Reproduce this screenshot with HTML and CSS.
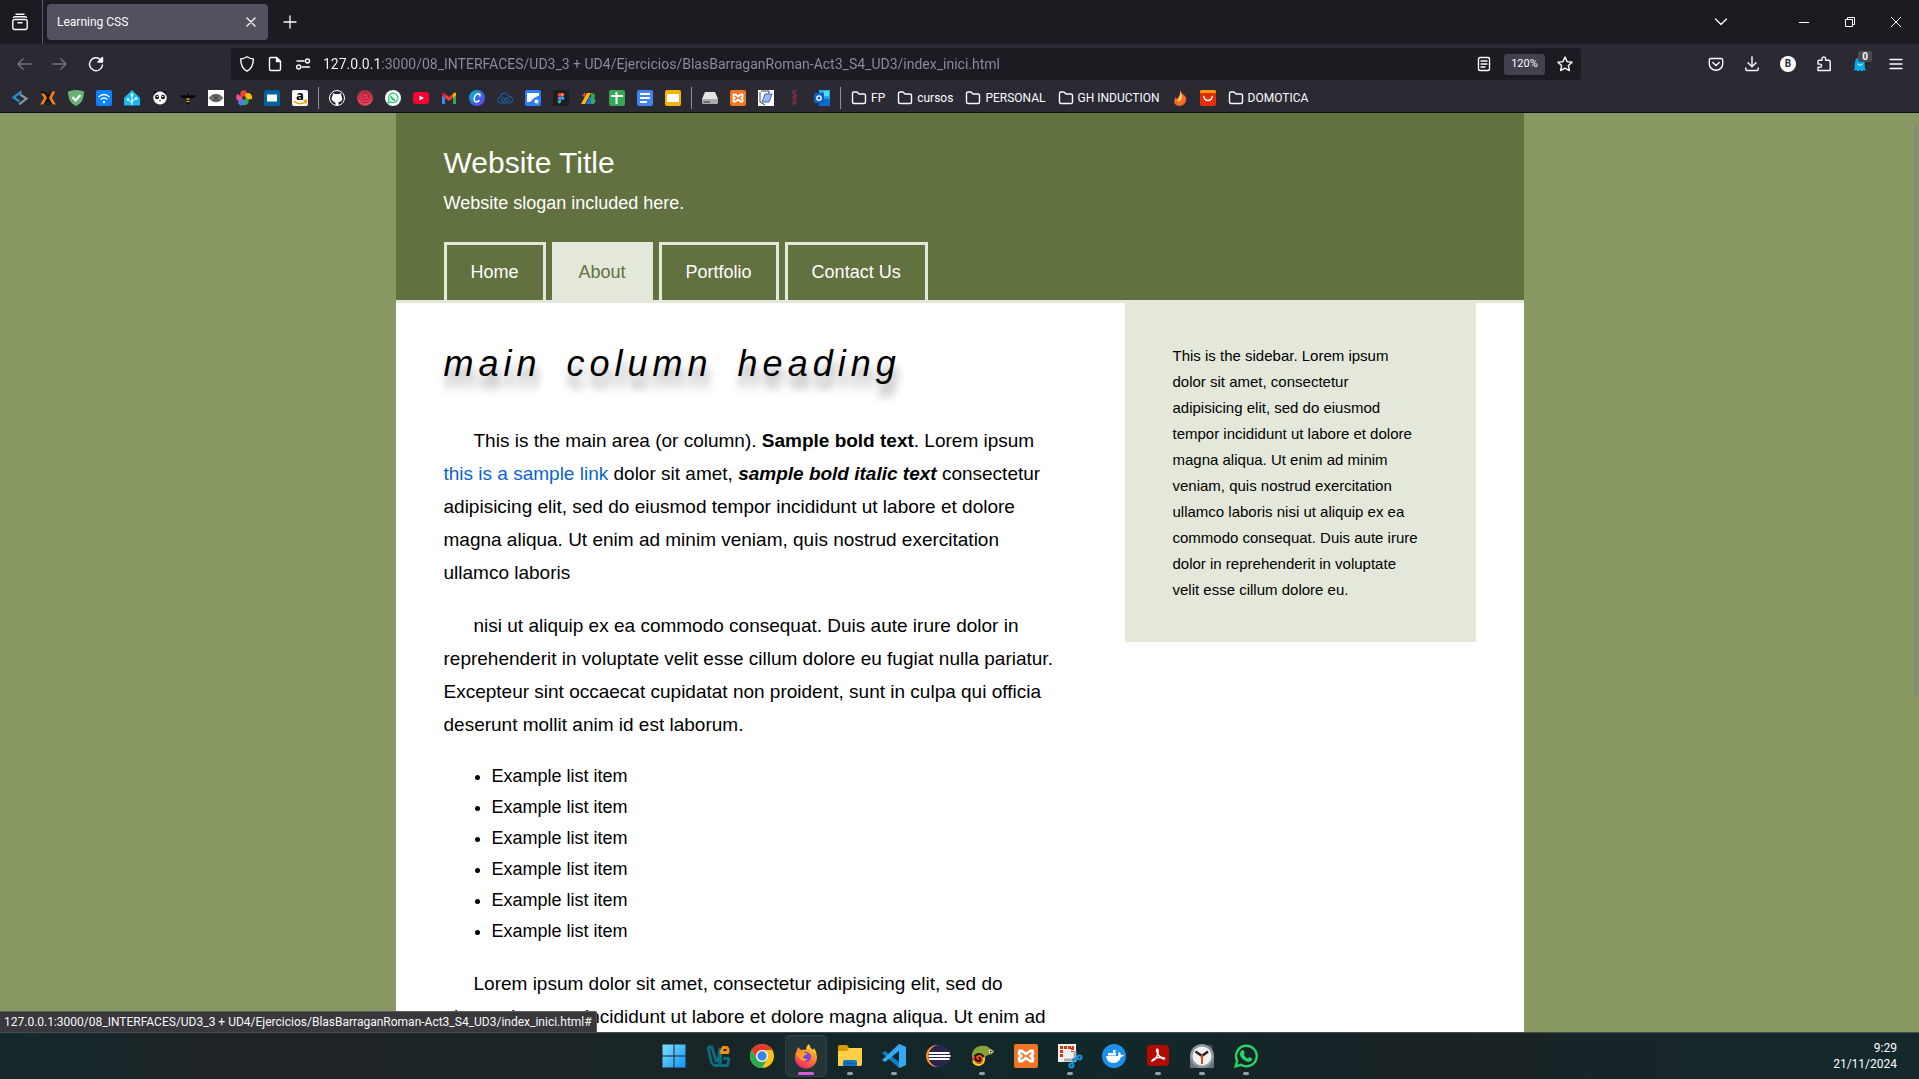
FILE: index.html
```html
<!DOCTYPE html>
<html lang="en">
<head>
<meta charset="utf-8">
<title>Learning CSS</title>
<link rel="stylesheet" href="styles.css">
</head>
<body>
<header class="browser">
  <div class="tabbar">
    <button class="icon-btn recent" aria-label="Recent browsing"><svg class="i18 line" viewBox="0 0 18 18"><rect x="1.8" y="6.500" width="14.400" height="10" rx="2"/><path d="M2.500 4.500Q3 3.700 4 3.700h10q1 0 1.500.8M5 1.200h8M7 9.800h4"/></svg></button>
    <div class="tab"><span>Learning CSS</span><button class="icon-btn" aria-label="Close tab"><svg class="i10 thin" viewBox="0 0 10 10"><path d="M1 1l8 8M9 1l-8 8"/></svg></button></div>
    <button class="icon-btn newtab" aria-label="New tab"><svg class="i14 thin" viewBox="0 0 14 14"><path d="M7 1v12M1 7h12"/></svg></button>
    <div class="window-controls">
      <button class="icon-btn alltabs" aria-label="List all tabs"><svg class="i14 thin" viewBox="0 0 14 14"><path d="M1.500 4L7 9.500 12.500 4"/></svg></button>
      <button class="icon-btn" aria-label="Minimize"><svg class="i10 hair" viewBox="0 0 10 10"><path d="M0 5.500h10"/></svg></button>
      <button class="icon-btn" aria-label="Restore"><svg class="i10 hair" viewBox="0 0 10 10"><path d="M.5 2.500h7v7h-7zM2.500 2.500v-2h7v7h-2"/></svg></button>
      <button class="icon-btn" aria-label="Close"><svg class="i10 hair" viewBox="0 0 10 10"><path d="M0 0l10 10M10 0L0 10"/></svg></button>
    </div>
  </div>
  <div class="navbar">
    <div class="history">
      <button class="icon-btn dim" aria-label="Back"><svg class="i16 line" viewBox="0 0 16 16"><path d="M15 8H2M7 3L2 8l5 5"/></svg></button>
      <button class="icon-btn dim" aria-label="Forward"><svg class="i16 line" viewBox="0 0 16 16"><path d="M1 8h13M9 3l5 5-5 5"/></svg></button>
      <button class="icon-btn" aria-label="Reload"><svg class="i16 line" viewBox="0 0 16 16"><path d="M12.500 3.500A6.500 6.500 0 1 0 14.500 9"/><path fill="#fbfbfe" d="M14.500 1.500v4.500H10z"/></svg></button>
    </div>
    <div class="urlbar">
      <button class="icon-btn" aria-label="Tracking protection"><svg class="i16 line" viewBox="0 0 16 16"><path d="M8 .8c2 1.400 4 2 6.300 2.200 0 6-1.800 9.800-6.300 12.200C3.500 12.800 1.700 9 1.700 3 4 2.800 6 2.200 8 .8z"/></svg></button>
      <button class="icon-btn" aria-label="Site information"><svg class="i16 line" viewBox="0 0 16 16"><path d="M3.500 1.500h6l4 4v7.500q0 1.500-1.500 1.500H4q-1.500 0-1.500-1.500V2.500q0-1 1-1z"/><path fill="#fbfbfe" d="M9.500 1.500v4h4z"/></svg></button>
      <button class="icon-btn" aria-label="Permissions"><svg class="i16 line" viewBox="0 0 16 16"><circle cx="12.500" cy="5" r="2"/><path d="M2 5h7M7 11h7.500"/><circle cx="3.700" cy="11" r="2"/></svg></button>
      <input class="address" aria-label="Address" value="127.0.0.1:3000/08_INTERFACES/UD3_3 + UD4/Ejercicios/BlasBarraganRoman-Act3_S4_UD3/index_inici.html">
      <button class="icon-btn" aria-label="Reader view"><svg class="i16 line" viewBox="0 0 16 16"><rect x="2.500" y="1.500" width="11" height="13" rx="1.500"/><path d="M5 5h6M5 8h6M5 11h4"/></svg></button>
      <button class="zoom">120%</button>
      <button class="icon-btn" aria-label="Bookmark this page"><svg class="i16 line" viewBox="0 0 16 16"><path d="M8 1l2.100 4.600 5 .6-3.700 3.400 1 5L8 12.100l-4.400 2.500 1-5L.9 6.200l5-.6z"/></svg></button>
    </div>
    <div class="extensions">
      <button class="icon-btn" aria-label="Pocket"><svg class="i16 line" viewBox="0 0 16 16"><path d="M3 2.500h10q1.700 0 1.700 1.700V8A6.700 6.200 0 0 1 1.300 8V4.200Q1.300 2.500 3 2.500z"/><path d="M4.800 6.500L8 9.500l3.200-3"/></svg></button>
      <button class="icon-btn" aria-label="Downloads"><svg class="i16 line" viewBox="0 0 16 16"><path d="M8 .8v9.700M4 6.800l4 4 4-4M1.800 12v1.500q0 1 1 1h10.400q1 0 1-1V12"/></svg></button>
      <button class="icon-btn" aria-label="Account"><span class="avatar">B</span></button>
      <button class="icon-btn" aria-label="Extensions"><svg class="i16 line" viewBox="0 0 16 16"><path d="M2 5.500q0-1.300 1.300-1.300H6V2.700a1.800 1.800 0 0 1 3.600 0v1.500h3.100q1.500 0 1.500 1.500v8.800H2v-3.200h2a1.600 1.600 0 0 0 0-3.200H2z"/></svg></button>
      <button class="icon-btn ghost" aria-label="Ghostery"><svg class="i16" viewBox="0 0 16 16"><path fill="#00aef0" d="M2 15c1-3 .5-5 1-9 .5-6 9-6 9.500 0 .3 4 0 6 1.500 9l-2-1-2 1.500L8 14l-2 1.500L4 14z"/><path d="M5.500 8q2.500 3 5 0" stroke="#fff" fill="none"/></svg><span class="badge">0</span></button>
      <button class="icon-btn" aria-label="Menu"><svg class="i16 line" viewBox="0 0 16 16"><path d="M2 3.500h12M2 8h12M2 12.500h12"/></svg></button>
    </div>
  </div>
  <nav class="bookmarks" aria-label="Bookmarks">
    <a href="#" aria-label="Sections"><svg class="i16" viewBox="0 0 16 16" fill="none" stroke-width="2.200"><path stroke="#1c8fd0" d="M9.500 1.500L1.500 7.500l6 4"/><path stroke="#8a99a5" d="M8 4.500l6.500 4-7.500 6"/></svg></a>
    <a href="#" aria-label="Nginx"><svg class="i16" viewBox="0 0 16 16"><path fill="#111" d="M0 1.500h6L8 5l2-3.500h6L11.500 8l4.500 6.500H0L4.500 8z"/><path fill="#2b2a33" d="M0 3v10l4-5zM16 3v10l-4-5zM5 14.500h6L8 11z"/><path fill="#f07c12" d="M1 3.500h3.500L7 8l-3.500 6.500H0L4 8zM15.500 1.500H12L9 8l3.500 6.500H16L12 8z"/></svg></a>
    <a href="#" aria-label="Adguard"><svg class="i16" viewBox="0 0 16 16"><path fill="#67b279" d="M8 0c3 .2 5.500.8 8 1.500 0 7-2 11.500-8 14.500C2 13 0 8.500 0 1.500 2.500.8 5 .2 8 0z"/><path d="M4.500 7l3 3.500L12.500 5" fill="none" stroke="#fff" stroke-width="2"/></svg></a>
    <a href="#" aria-label="Wifi"><svg class="i16" viewBox="0 0 16 16"><rect width="16" height="16" rx="2" fill="#0a84ff"/><path d="M2.500 7q5.500-5 11 0M4.500 9.500q3.500-3 7 0" fill="none" stroke="#fff" stroke-width="1.300"/><circle cx="8" cy="12" r="1.200" fill="#fff"/></svg></a>
    <a href="#" aria-label="Home Assistant"><svg class="i16" viewBox="0 0 16 16"><path fill="#18bcf2" d="M8 0l8 8v7.500H0V8z"/><path d="M8 15V5M8 13L4 9.500M8 11.500L12 8" fill="none" stroke="#fff"/><g fill="#fff"><circle cx="8" cy="5" r="1.400"/><circle cx="4" cy="9.500" r="1.300"/><circle cx="12" cy="8.500" r="1.300"/></g></svg></a>
    <a href="#" aria-label="Panda"><svg class="i16" viewBox="0 0 16 16"><circle cx="3.500" cy="3" r="2" fill="#111"/><circle cx="12.500" cy="3" r="2" fill="#111"/><ellipse cx="8" cy="8" rx="6.700" ry="6.500" fill="#fff"/><ellipse cx="5" cy="7" rx="2" ry="2.200" fill="#111"/><ellipse cx="11" cy="7" rx="2" ry="2.200" fill="#111"/><circle cx="5.300" cy="6.500" r=".8" fill="#fff"/><circle cx="10.700" cy="6.500" r=".8" fill="#fff"/><path d="M7 10h2l-1 1.500z"/></svg></a>
    <a href="#" aria-label="Bee"><svg class="i16" viewBox="0 0 16 16"><path fill="#070707" d="M0 6q5-2 7 0 0-3 1-3t1 3q2-2 7 0-3 3-6 2v5l-2 2-2-2V8Q3 9 0 6z"/><path stroke="#e6b34b" stroke-width="1.300" d="M6.500 9h3M6.500 11.500h3"/></svg></a>
    <a href="#" aria-label="Mesh"><svg class="i16" viewBox="0 0 16 16"><path fill="#fff" d="M0 0h16v16H0z"/><path fill="#999" stroke="#333" stroke-width=".7" d="M1 8q7-7.500 14 0-7 7.500-14 0z"/><path d="M3 8q5-5 10 0-5 5-10 0M5.500 8q2.500-3 5 0-2.500 3-5 0M4 5l8 6M12 5l-8 6" fill="none" stroke="#222" stroke-width=".6"/></svg></a>
    <a href="#" aria-label="Photos"><svg class="i16" viewBox="0 0 16 16"><path fill="#ea4335" d="M5 6C2 2 8-2 11 2L9 7z"/><path fill="#fbbc04" d="M9 4c5-3 8 2 7 5l-6 1z"/><path fill="#34a853" d="M11 8c4 4 0 8-4 7l1-6z"/><path fill="#4285f4" d="M9 12c-1 5-7 4-7 0l5-4z"/><path fill="#e0528c" d="M6 10C1 13-1 8 1 4l6 3z"/><circle cx="8" cy="8" r="1.600" fill="#2b2a33"/></svg></a>
    <a href="#" aria-label="Film"><svg class="i16" viewBox="0 0 16 16"><rect width="16" height="16" rx="2" fill="#02629e"/><path fill="#fff" d="M3 4l1 1 1-1 1 1 1-1 1 1 1-1 1 1 1-1 1 1 1-1v8l-1-1-1 1-1-1-1 1-1-1-1 1-1-1-1 1-1-1-1 1z"/></svg></a>
    <a href="#" aria-label="Amazon"><svg class="i16" viewBox="0 0 16 16"><rect width="16" height="16" rx="2" fill="#fff"/><text x="8" y="10" text-anchor="middle" class="logo-a">a</text><path d="M1.500 11q6 5 12 1M11.500 11l3-.5-.8 3" fill="none" stroke="#ff9900" stroke-width="1.500"/></svg></a>
    <span class="sep"></span>
    <a href="#" aria-label="GitHub"><svg class="i16" viewBox="0 0 16 16"><circle cx="8" cy="8" r="7.500" fill="#24222a" stroke="#fff"/><path fill="#fff" d="M4 3l2 1h4l2-1 .5 3c2 4-.5 6-3 6v3h-3v-2l-2-1 2 .2V12c-3 0-5-3-3-6z"/></svg></a>
    <a href="#" aria-label="Spiral"><svg class="i16" viewBox="0 0 16 16"><circle cx="8" cy="8" r="7.800" fill="#f3405a"/><g fill="none" stroke="#8d2036"><circle cx="8" cy="5.500" r="2"/><circle cx="8" cy="6" r="4"/><circle cx="8" cy="6.500" r="6"/></g></svg></a>
    <a href="#" aria-label="WhatsApp"><svg class="i16" viewBox="0 0 16 16"><circle cx="8" cy="8" r="8" fill="#fff"/><path d="M3 13l1-3a4.700 4.700 0 1 1 2 2z" fill="none" stroke="#25c866" stroke-width="1.200"/><path d="M6 6q.5 3.500 4 4" stroke="#25c866" stroke-width="1.800" fill="none"/></svg></a>
    <a href="#" aria-label="YouTube"><svg class="i16" viewBox="0 0 16 16"><rect y="2" width="16" height="12" rx="3" fill="#ff0033"/><path fill="#fff" d="M6.500 5.500L11 8l-4.500 2.500z"/></svg></a>
    <a href="#" aria-label="Gmail"><svg class="i16" viewBox="0 0 16 16"><path fill="#4285f4" d="M1 4l3 2v8H1z"/><path fill="#34a853" d="M12 6l3-2v10h-3z"/><path fill="#ea4335" d="M3 3l5 4 5-4v4l-5 4-5-4z"/><path fill="#c5221f" d="M1 3.500Q2 1.500 4 3.500v4L1 5.500z"/><path fill="#fbbc04" d="M12 4q2-2.500 3-.5v2l-3 2z"/></svg></a>
    <a href="#" aria-label="Canva"><svg class="i16" viewBox="0 0 16 16"><defs><linearGradient id="canva" x1="0" y1="0" x2="1" y2="1"><stop stop-color="#00c4cc"/><stop offset=".55" stop-color="#2f6be0"/><stop offset="1" stop-color="#8b2cf5"/></linearGradient></defs><circle cx="8" cy="8" r="8" fill="url(#canva)"/><path d="M10.500 6.500Q12 4 9.500 3.700C6 3.500 4 9 6 11.500q2 1.500 4.500-1.500" fill="none" stroke="#fff" stroke-width="1.500"/></svg></a>
    <a href="#" aria-label="Cloud"><svg class="i16" viewBox="0 0 16 16" fill="none" stroke="#1769b5"><path d="M3.500 13Q.5 13 .5 10t3-3q0-4 4-4 3 0 4 3 4 0 4 3.500T12 13z"/><circle cx="5.800" cy="9.500" r="1.800"/><circle cx="10.200" cy="9.500" r="1.800"/></svg></a>
    <a href="#" aria-label="Drive"><svg class="i16" viewBox="0 0 16 16"><rect width="16" height="16" rx="2" fill="#2d7ff9"/><path fill="#fff" d="M2 3h12v2.500L9 8l-4 4H2z"/><circle cx="11.500" cy="11.500" r="2" fill="#fff"/></svg></a>
    <a href="#" aria-label="Figma"><svg class="i16" viewBox="0 0 16 16"><path fill="#1e1e1e" d="M0 0h16v16H0z"/><path fill="#f24e1e" d="M8 3v3.500H6.500a1.700 1.700 0 0 1 0-3.500z"/><path fill="#ff7262" d="M8 3h1.500a1.700 1.700 0 0 1 0 3.500H8z"/><path fill="#a259ff" d="M8 6.500V10H6.500a1.700 1.700 0 0 1 0-3.500z"/><circle cx="9.700" cy="8.200" r="1.700" fill="#1abcfe"/><path fill="#0acf83" d="M8 10v1.700a1.700 1.700 0 1 1-1.700-1.700z"/></svg></a>
    <a href="#" aria-label="Design"><svg class="i16" viewBox="0 0 16 16"><path fill="#ea4335" d="M1 6l3-4 1 5z"/><path fill="#fbbc04" d="M6 3h4L4 14H0z"/><path fill="#1a73e8" d="M8 7h3v7H5z"/><path fill="#34a853" d="M10 3q4 0 4 3l-1 2q3 2 0 6h-3z"/></svg></a>
    <a href="#" aria-label="Sheets"><svg class="i16" viewBox="0 0 16 16"><rect width="16" height="16" rx="2" fill="#34a853"/><path stroke="#fff" stroke-width="2" d="M2 6h12M7.500 2v12"/></svg></a>
    <a href="#" aria-label="Docs"><svg class="i16" viewBox="0 0 16 16"><rect width="16" height="16" rx="2" fill="#4285f4"/><path stroke="#fff" stroke-width="2" d="M3 4h10M3 8h10M3 12h7"/></svg></a>
    <a href="#" aria-label="Slides"><svg class="i16" viewBox="0 0 16 16"><rect width="16" height="16" rx="2" fill="#f5b400"/><path fill="#fff" d="M2 4h12v8H2z"/></svg></a>
    <span class="sep"></span>
    <a href="#" aria-label="Disk"><svg class="i16" viewBox="0 0 16 16"><path fill="#e4e4e4" d="M3 2h10l3 7H0z"/><path fill="#aaa" d="M0 9h16v4q0 1-1 1H1q-1 0-1-1z"/><path fill="#333" d="M1.500 11.500H8v1H1.500z"/><path fill="#5fd33a" d="M12 11h2v1h-2z"/></svg></a>
    <a href="#" aria-label="XAMPP"><svg class="i16" viewBox="0 0 16 16"><rect width="16" height="16" rx="2" fill="#f37623"/><path d="M5.500 4.500h-2v3L5 8l-1.500.5v3h2L8 9.500l2.500 2h2v-3L11 8l1.500-.5v-3h-2L8 6.500z" fill="none" stroke="#fff" stroke-width="1.800" stroke-linejoin="round"/></svg></a>
    <a href="#" aria-label="Notes"><svg class="i16" viewBox="0 0 16 16"><path fill="#fff" d="M0 0h16v16H0z"/><path d="M3 1h8v3M2 2v10l5 3" fill="none" stroke="#444"/><path fill="#9ab8ef" stroke="#3e68bd" d="M7 4h7l-3 8H4z"/></svg></a>
    <a href="#" aria-label="Dragon"><svg class="i16" viewBox="0 0 16 16"><path fill="#702d42" d="M7 0h4L9 3l2 2-1 4 1 5-4 1-2-3 3-1-2-4 2-3-3-1z"/></svg></a>
    <a href="#" aria-label="Outlook"><svg class="i16" viewBox="0 0 16 16"><path fill="#28a8ea" d="M5 0h11v10H5z"/><path fill="#50d9ff" d="M10 1h5v5h-5z"/><path fill="#0a6ccf" d="M4 8l12 1v7H5z"/><rect y="3" width="10" height="10" rx="1" fill="#0f5fbd"/><circle cx="5" cy="8" r="2.200" fill="none" stroke="#fff" stroke-width="1.300"/></svg></a>
    <span class="sep"></span>
    <a href="#"><svg class="i16 line" viewBox="0 0 16 16"><path d="M1.500 3.500q0-1.500 1.500-1.500h3l2 2h5q1.500 0 1.500 1.500v6.500q0 1.500-1.500 1.500H3q-1.500 0-1.500-1.500z"/></svg>FP</a>
    <a href="#"><svg class="i16 line" viewBox="0 0 16 16"><path d="M1.500 3.500q0-1.500 1.500-1.500h3l2 2h5q1.500 0 1.500 1.500v6.500q0 1.500-1.500 1.500H3q-1.500 0-1.500-1.500z"/></svg>cursos</a>
    <a href="#"><svg class="i16 line" viewBox="0 0 16 16"><path d="M1.500 3.500q0-1.500 1.500-1.500h3l2 2h5q1.500 0 1.500 1.500v6.500q0 1.500-1.500 1.500H3q-1.500 0-1.500-1.500z"/></svg>PERSONAL</a>
    <a href="#"><svg class="i16 line" viewBox="0 0 16 16"><path d="M1.500 3.500q0-1.500 1.500-1.500h3l2 2h5q1.500 0 1.500 1.500v6.500q0 1.500-1.500 1.500H3q-1.500 0-1.500-1.500z"/></svg>GH INDUCTION</a>
    <a href="#" aria-label="Flame"><svg class="i16" viewBox="0 0 16 16"><path fill="#f4692b" d="M8 0q1 3 4 5t2 6-6 5q-5 0-6-4 0-3 2-5 0 2 1.500 2Q9 5 8 0z"/><path fill="#ffc24a" d="M8 0q1 3 2 6t-3 6q-2-1-1.500-3Q9 5 8 0z"/></svg></a>
    <a href="#" aria-label="AliExpress"><svg class="i16" viewBox="0 0 16 16"><rect width="16" height="16" rx="2" fill="#e62e04"/><path fill="#ff9a00" d="M0 3V2q0-2 2-2h12q2 0 2 2v1z"/><path d="M3.500 6q1 4.500 4.500 4.500T12.500 6" fill="none" stroke="#fff" stroke-width="1.300"/></svg></a>
    <a href="#"><svg class="i16 line" viewBox="0 0 16 16"><path d="M1.500 3.500q0-1.500 1.500-1.500h3l2 2h5q1.500 0 1.500 1.500v6.500q0 1.500-1.500 1.500H3q-1.500 0-1.500-1.500z"/></svg>DOMOTICA</a>
  </nav>
</header>

<div class="viewport">
  <div class="page">
    <header class="masthead">
      <h1>Website Title</h1>
      <p>Website slogan included here.</p>
      <nav class="site-nav">
        <a href="#">Home</a>
        <a href="#" class="current">About</a>
        <a href="#">Portfolio</a>
        <a href="#">Contact Us</a>
      </nav>
    </header>
    <div class="columns">
      <main class="main">
        <h2>main column heading</h2>
        <p>This is the main area (or column). <strong>Sample bold text</strong>. Lorem ipsum <a href="#">this is a sample link</a> dolor sit amet, <strong><em>sample bold italic text</em></strong> consectetur adipisicing elit, sed do eiusmod tempor incididunt ut labore et dolore magna aliqua. Ut enim ad minim veniam, quis nostrud exercitation ullamco laboris</p>
        <p>nisi ut aliquip ex ea commodo consequat. Duis aute irure dolor in reprehenderit in voluptate velit esse cillum dolore eu fugiat nulla pariatur. Excepteur sint occaecat cupidatat non proident, sunt in culpa qui officia deserunt mollit anim id est laborum.</p>
        <ul>
          <li>Example list item</li>
          <li>Example list item</li>
          <li>Example list item</li>
          <li>Example list item</li>
          <li>Example list item</li>
          <li>Example list item</li>
        </ul>
        <p>Lorem ipsum dolor sit amet, consectetur adipisicing elit, sed do eiusmod tempor incididunt ut labore et dolore magna aliqua. Ut enim ad</p>
      </main>
      <aside class="sidebar">
        <p>This is the sidebar. Lorem ipsum dolor sit amet, consectetur adipisicing elit, sed do eiusmod tempor incididunt ut labore et dolore magna aliqua. Ut enim ad minim veniam, quis nostrud exercitation ullamco laboris nisi ut aliquip ex ea commodo consequat. Duis aute irure dolor in reprehenderit in voluptate velit esse cillum dolore eu.</p>
      </aside>
    </div>
  </div>
  <div class="scroll-thumb"></div>
  <div class="status">127.0.0.1:3000/08_INTERFACES/UD3_3 + UD4/Ejercicios/BlasBarraganRoman-Act3_S4_UD3/index_inici.html#</div>
</div>

<footer class="taskbar">
  <div class="apps">
    <button class="app" aria-label="Start"><svg viewBox="0 0 24 24"><defs><linearGradient id="win" x1="0" y1="0" x2="1" y2="1"><stop stop-color="#7fe0ff"/><stop offset="1" stop-color="#0f93f5"/></linearGradient></defs><path fill="url(#win)" d="M.5.500h11v11H.5zM12.500.500h11v11h-11zM.5 12.500h11v11H.5zM12.500 12.500h11v11h-11z"/></svg></button>
    <button class="app" aria-label="VirtualBox"><svg viewBox="0 0 24 24" fill="none" stroke-width="2.800" stroke-linejoin="round"><path stroke="#0d6d7f" d="M2 3h4l4 14h2l2-13M2 3l3.500 16 3 2.500h4l2-3V10M14 18v3.500h7.500l1-4v-3H17"/><path stroke="#ee9011" d="M15 8.500h7V5l-1-1.500h-4z"/></svg></button>
    <button class="app" aria-label="Chrome"><svg viewBox="0 0 24 24"><circle cx="12" cy="12" r="12" fill="#fbc116"/><path fill="#e33b2e" d="M1.600 6A12 12 0 0 1 22.400 6H12L7 15z"/><path fill="#2da94f" d="M1.600 6A12 12 0 0 0 12 24l5.200-9L12 17l-5-2z"/><circle cx="12" cy="12" r="6" fill="#fff"/><circle cx="12" cy="12" r="4.700" fill="#3b82ee"/></svg></button>
    <button class="app active" aria-label="Firefox"><svg viewBox="0 0 24 24"><defs><linearGradient id="fox" x1=".8" y1="0" x2=".3" y2="1"><stop stop-color="#fff04a"/><stop offset=".4" stop-color="#ff9222"/><stop offset="1" stop-color="#f5216a"/></linearGradient></defs><path fill="url(#fox)" d="M3 6l1-3 3 3q3-1 5 0 0-4 3-6 1 4 4 6l1-2q3 4 3 9A11 11 0 0 1 1 14Q1 9 3 6z"/><circle cx="12" cy="13" r="5" fill="#7542e5"/><path fill="#ff9d24" d="M2 9q5-3 9 0l3 1q-4 1-5 3 1 2 5 2-4 4-8 0T2 9z"/></svg></button>
    <button class="app running" aria-label="File Explorer"><svg viewBox="0 0 24 24"><path fill="#d99a00" d="M0 3q0-2 2-2h7l2 3v5H0z"/><path fill="#ffcf48" d="M0 7h9l2-3h13v16q0 2-2 2H0z"/><path fill="#0f74c5" d="M5 22v-4q0-2 2-2h10q2 0 2 2v4z"/><path fill="#0b5a9c" d="M8 19h8v1H8z"/></svg></button>
    <button class="app running" aria-label="Visual Studio Code"><svg viewBox="0 0 24 24"><path fill="#0d7fc9" d="M17 0l7 3v18l-7 3L0 9l3-2 14 11z"/><path fill="#32a9f2" d="M17 0l7 3v18l-7 3V7L3 18l-3-2z"/></svg></button>
    <button class="app" aria-label="Eclipse"><svg viewBox="0 0 24 24"><circle cx="11" cy="12" r="11" fill="#f7941e"/><circle cx="13.500" cy="12" r="11" fill="#2c2255"/><path stroke="#fff" stroke-width="1.800" d="M3 9h20.500M2.500 12h22M3 15h20.500"/></svg></button>
    <button class="app running" aria-label="Chameleon"><svg viewBox="0 0 24 24"><path fill="#8ba135" d="M2 14Q1 4 10 2q6-1 8 1l6 4q0 3-6 4-3 1-4 5l-3-3q-5-1-6 7-3-2-3-6z"/><circle cx="20.500" cy="7.500" r="1.800" fill="#fff"/><circle cx="20.700" cy="7.500" r=".9"/><circle cx="9" cy="15.500" r="6.500" fill="#161616"/><path d="M9 15q-2 0-2-2 3-3 5 1 1 5-4 5-6-1-4-7" fill="none" stroke="#f0481e" stroke-width="2"/><path d="M14 13q1 7-5 8-4 0-6-4" fill="none" stroke="#ffd51e" stroke-width="2"/></svg></button>
    <button class="app" aria-label="XAMPP Control Panel"><svg viewBox="0 0 24 24"><rect width="24" height="24" rx="2" fill="#ee7528"/><path d="M8 7H5.500L5 10l2.500 2L5 14l.5 3H8l4-3 4 3h2.500l.5-3-2.500-2L19 10l-.5-3H16l-4 3z" fill="none" stroke="#fff" stroke-width="2.800" stroke-linejoin="round"/></svg></button>
    <button class="app running" aria-label="Snipping Tool"><svg viewBox="0 0 24 24"><path fill="#f2f2f2" d="M0 0h18v18H0z"/><path d="M3.500 13V3.500h11V8" fill="none" stroke="#d8360b" stroke-width="3" stroke-dasharray="3 1"/><path d="M6 16h11V7" fill="none" stroke="#a9afb3" stroke-width="3"/><g fill="none" stroke="#1396df" stroke-width="2"><circle cx="21.500" cy="13.500" r="2"/><circle cx="13.500" cy="21.500" r="2"/><path d="M19 14l-5 2M15 19l2-5"/></g></svg></button>
    <button class="app" aria-label="Docker"><svg viewBox="0 0 24 24"><circle cx="12" cy="12" r="12" fill="#1d8fe8"/><path fill="#fff" d="M4 12h12q1-2 0-3l1-1q2 1 2 3h3q-1 2-3 2-2 6-8 6-6 0-7-7zM6 9h8v2.500H6zM11 6h2.500v3H11z"/></svg></button>
    <button class="app running" aria-label="Acrobat"><svg viewBox="0 0 24 24"><rect x="1" y="1" width="22" height="21" rx="4" fill="#b30b00"/><path d="M6 17c4-1 7-7 6-11-1-2-2 0-1 2 1 4 5 7 7 7 2-1-2-2-5-1.500-3 0-7 2-7 3.500z" fill="none" stroke="#fff" stroke-width="1.600"/></svg></button>
    <button class="app running" aria-label="Clock"><svg viewBox="0 0 24 24"><rect y="12" width="24" height="12" rx="1" fill="#69737c"/><circle cx="20" cy="3" r="3" fill="#3c3c40"/><circle cx="12" cy="12" r="12" fill="#8d969d"/><circle cx="12" cy="12" r="9.500" fill="#f1f1f1"/><path d="M5.500 7.500L12 12l6-4.500" fill="none" stroke="#252525" stroke-width="2.500"/><path stroke="#df4b19" stroke-width="2" d="M12 11v9"/></svg></button>
    <button class="app running" aria-label="WhatsApp"><svg viewBox="0 0 24 24"><path d="M1.700 22.300l1.500-5.600A10.300 10.300 0 1 1 7 20.800z" fill="none" stroke="#29d366" stroke-width="2.400"/><path fill="#29d366" d="M8 6q1.500-.5 2 1l.7 2-1 1.500q1 2.500 4 4l1.500-1.500 2.600 1.200q.8.500 0 2-2 2.500-5.500 1-5-2-6.500-6.500Q5.500 8 8 6z"/></svg></button>
  </div>
  <div class="clock"><span>9:29</span><span>21/11/2024</span></div>
</footer>
</body>
</html>
```

FILE: styles.css
```css
* { box-sizing: border-box; }
body {
  margin: 0;
  height: 100vh;
  display: flex;
  flex-direction: column;
  overflow: hidden;
  font-family: "Liberation Sans", Arial, sans-serif;
  background: #879862;
}
button { border: 0; padding: 0; background: none; color: inherit; font: inherit; }
a { color: inherit; text-decoration: none; }
svg { display: block; flex: none; overflow: visible; }

/* Browser window */
.browser {
  flex: none;
  color: #fbfbfe;
  background: #2b2a33;
  border-bottom: 1px solid #0c0c0d;
  font: 12px/16px Roboto, "Noto Sans", sans-serif;
}
.icon-btn { display: flex; align-items: center; justify-content: center; flex: none; }
.i10 { width: 10px; height: 10px; }
.i14 { width: 14px; height: 14px; }
.i16 { width: 16px; height: 16px; }
.i18 { width: 18px; height: 18px; }
.line, .thin, .hair { fill: none; stroke: currentColor; stroke-linecap: round; stroke-linejoin: round; }
.line { stroke-width: 1.4; }
.thin { stroke-width: 1.3; }
.hair { stroke-width: 1; stroke-linecap: butt; stroke-linejoin: miter; }

.tabbar { display: flex; align-items: center; height: 44px; background: #1c1b22; }
.recent { width: 43px; height: 44px; border-right: 1px solid #5b5b66; padding-right: 3px; }
.tab {
  display: flex;
  align-items: center;
  justify-content: space-between;
  width: 221px;
  height: 36px;
  margin-left: 4px;
  padding: 0 12px 0 10px;
  border-radius: 4px;
  background: #52525e;
}
.newtab { margin-left: 15px; }
.window-controls { display: flex; margin-left: auto; }
.window-controls .icon-btn { width: 46px; height: 44px; }
.window-controls .alltabs { margin-right: 37px; }

.navbar { display: flex; align-items: center; height: 40px; }
.history { display: flex; gap: 20px; width: 231px; padding-left: 16px; }
.dim { color: #76757e; }
.urlbar {
  flex: 0 1 1350px;
  display: flex;
  align-items: center;
  gap: 12px;
  height: 32px;
  padding: 0 8px;
  border-radius: 4px;
  background: #1c1b22;
}
.address {
  flex: 1;
  min-width: 0;
  border: 0;
  padding: 0;
  font: 14px/20px Roboto, "Noto Sans", sans-serif;
  color: transparent;
  background: linear-gradient(90deg, #fbfbfe 57px, #8f8e97 57px);
  background-clip: text;
  -webkit-background-clip: text;
}
.zoom { width: 41px; height: 21px; border-radius: 3px; background: #42414d; font-size: 11px; }
.extensions { display: flex; align-items: center; gap: 20px; margin-left: auto; padding-right: 15px; }
.avatar { width: 16px; height: 16px; border-radius: 50%; background: #fff; color: #2b2a33; font-size: 10px; font-weight: 700; }
.ghost { position: relative; }
.badge {
  position: absolute;
  top: -5px;
  left: 6px;
  width: 14px;
  height: 11px;
  border-radius: 2px;
  background: #4a4a4f;
  font-size: 10px;
  line-height: 11px;
  font-weight: 700;
}

.bookmarks { display: flex; align-items: center; gap: 12px; height: 28px; padding: 0 12px; white-space: nowrap; }
.bookmarks a { display: flex; align-items: center; gap: 4px; }
.sep { width: 1px; height: 22px; margin: 0 -2px; background: #8f8f98; }
.logo-a { font: 700 13px "Open Sans", sans-serif; }

/* Web page */
.viewport { position: relative; flex: 1; min-height: 0; overflow: hidden; background: #879862; }
.page { max-width: 1128px; min-height: 100%; margin: 0 auto; background: #fff; }
.masthead { padding: 29px 48px 0; background: #61713f; border-bottom: 3px solid #e4e8db; color: #fff; }
.masthead h1 { margin: 0; font-size: 30px; line-height: 42px; font-weight: 400; }
.masthead p { margin: 0; padding: 4px 0 23px; font-size: 18px; line-height: 31px; }
.site-nav { display: flex; gap: 6px; }
.site-nav a {
  height: 58px;
  padding: 12px 24px 0;
  border: 3px solid #e4e8db;
  border-bottom: 0;
  font-size: 18px;
  line-height: 31px;
}
.site-nav .current { background: #e4e8db; color: #61713f; }

.columns { display: flex; align-items: flex-start; justify-content: space-between; padding: 0 48px; }
.main { width: 616px; padding-top: 30px; }
.main h2 {
  margin: 0;
  font-size: 36px;
  line-height: 61px;
  font-weight: 400;
  font-style: italic;
  letter-spacing: 5px;
  word-spacing: 10px;
  text-shadow: 2px 12px 10px rgba(0, 0, 0, .4);
}
.main p { margin: 0; font-size: 19px; line-height: 33px; text-indent: 30px; }
.main h2 + p { margin-top: 30px; }
.main p + p { margin-top: 20px; }
.main p a { color: #0b63ce; }
.main ul { margin: 20px 0; padding-left: 48px; }
.main li { font-size: 18px; line-height: 31px; }
.sidebar { width: 351px; padding: 40px 56px 39px 48px; background: #e4e8db; }
.sidebar p { margin: 0; font-size: 15px; line-height: 26px; }

.scroll-thumb { position: absolute; top: 12px; right: 2px; width: 2px; height: 573px; background: #86868a; }
.status {
  position: absolute;
  left: 0;
  bottom: 0;
  height: 21px;
  padding: 0 4px;
  border: 1px solid #5c5c61;
  border-width: 1px 1px 0 0;
  border-radius: 0 2px 0 0;
  background: #38383d;
  color: #f9f9fa;
  font: 12px/20px Roboto, "Noto Sans", sans-serif;
  white-space: nowrap;
}

/* Taskbar */
.taskbar {
  flex: none;
  display: grid;
  grid-template-columns: 1fr auto 1fr;
  align-items: center;
  height: 47px;
  border-top: 1px solid #444c4e;
  background: linear-gradient(90deg, #14292b, #1f2326 12%, #192527 35%, #10282a 55%, #1a2225 75%, #14292b);
  color: #fff;
}
.apps { grid-column: 2; display: flex; gap: 4px; }
.app { position: relative; display: flex; align-items: center; justify-content: center; width: 40px; height: 40px; border-radius: 4px; }
.app svg { width: 24px; height: 24px; }
.active { background: #233537; box-shadow: 0 0 0 1px #304345; }
.running::after, .active::after { content: ""; position: absolute; bottom: 1px; width: 6px; height: 3px; border-radius: 2px; background: #9aa0a1; }
.active::after { width: 16px; background: #d95ae0; }
.clock { display: flex; flex-direction: column; align-items: flex-end; padding-right: 22px; font: 12px/16px Roboto, "Noto Sans", sans-serif; }
```
